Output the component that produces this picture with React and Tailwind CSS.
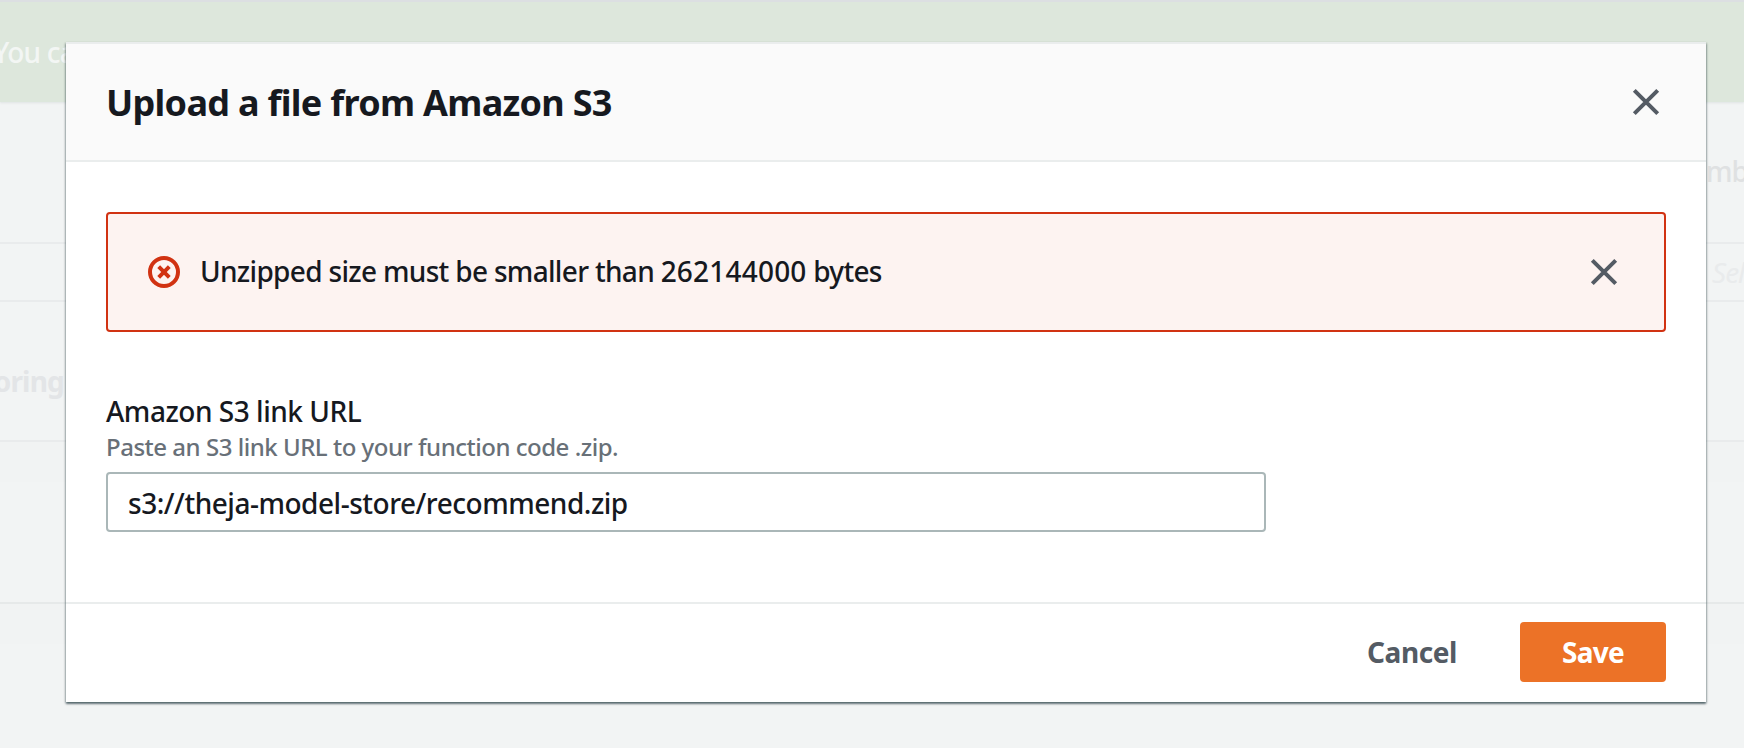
import React from "react";

function CloseIcon({ className }) {
  return (
    <svg viewBox="0 0 32 32" className={className} fill="none" stroke="#545b64" strokeWidth="4">
      <path d="M4.3 4.3 27.7 27.7M27.7 4.3 4.3 27.7" />
    </svg>
  );
}

function ErrorIcon() {
  return (
    <svg viewBox="0 0 32 32" className="h-8 w-8 shrink-0" fill="none" stroke="#d13212" strokeWidth="4">
      <circle cx="16" cy="16" r="14" />
      <path d="M10.7 10.7 21.3 21.3M21.3 10.7 10.7 21.3" />
    </svg>
  );
}

function PageBehind() {
  return (
    <div aria-hidden="true" className="flex h-[748px] flex-col overflow-hidden bg-[#f2f4f4]">
      <div className="h-0.5 shrink-0 bg-[#dcdfe2]" />
      <div className="flex h-[100px] shrink-0 items-center bg-[#dde7dc] text-[28px] font-medium tracking-[-0.8px] text-[#f3f6f4] shadow-[0_1px_2px_#dfe3e3]">
        <span className="-ml-[7px] whitespace-nowrap">You ca</span>
      </div>
      <div className="flex h-[142px] shrink-0 items-start justify-end border-b-2 border-[#e9ebec] pt-[49px]">
        <div className="w-[38px] whitespace-nowrap text-[28px] font-medium leading-10 tracking-[-1px] text-[#dfe1e2]">mb</div>
      </div>
      <div className="flex h-[58px] shrink-0 items-center justify-end border-b-2 border-[#e9ebec]">
        <div className="w-8 whitespace-nowrap text-[28px] italic leading-10 tracking-[-1px] text-[#e9ebec]">Sel</div>
      </div>
      <div className="flex h-[140px] shrink-0 items-start border-b-2 border-[#e9ebec] pt-[59px]">
        <div className="flex w-16 justify-end whitespace-nowrap text-[28px] font-bold leading-10 tracking-[-0.8px] text-[#e3e5e7]">oring</div>
      </div>
      <div className="h-10 shrink-0 bg-[#f1f3f3]" />
      <div className="h-[122px] shrink-0 border-b-2 border-[#e6e9e9]" />
      <div className="h-10 shrink-0 bg-[#f1f3f3]" />
    </div>
  );
}

export default function App() {
  return (
    <div className="relative h-[748px] w-[1744px] overflow-hidden font-['Noto_Sans',sans-serif] text-[#16191f]">
      <PageBehind />
      <div className="absolute inset-0 flex items-start pl-[66px] pt-[42px]">
        <div role="dialog" className="flex h-[660px] w-[1640px] flex-col bg-white shadow-[0_2px_2px_0_rgba(0,28,36,0.5),1px_1px_2px_0_rgba(0,28,36,0.2),-1px_1px_2px_0_rgba(0,28,36,0.2)]">
          <header className="flex h-[120px] shrink-0 items-center justify-between border-y-2 border-[#eaeded] bg-[#fafafa] pl-10 pr-11">
            <h2 className="pt-0.5 text-[36px] font-bold leading-[44px] tracking-[-0.7px]">Upload a file from Amazon S3</h2>
            <button type="button" aria-label="Close">
              <CloseIcon className="h-8 w-8" />
            </button>
          </header>

          <div className="flex grow flex-col px-10 pt-[50px]">
            <div className="flex h-[120px] items-center rounded-[4px] border-2 border-[#d13212] bg-[#fdf3f1] pl-10 pr-11">
              <ErrorIcon />
              <p className="ml-5 grow pb-0.5 text-[28px] font-medium leading-10 tracking-[-0.68px]">
                Unzipped size must be smaller than <span className="tracking-[0.2px]">262144000</span> bytes
              </p>
              <button type="button" aria-label="Dismiss">
                <CloseIcon className="h-8 w-8" />
              </button>
            </div>

            <label className="mt-[59px] text-[28px] font-medium leading-10 tracking-[-0.48px]">Amazon S3 link URL</label>
            <p className="text-[24px] font-medium leading-8 tracking-[-0.48px] text-[#687078]">
              Paste an S3 link URL to your function code .zip.
            </p>
            <input
              type="text"
              defaultValue="s3://theja-model-store/recommend.zip"
              className="mt-[9px] h-[60px] w-[1160px] rounded-[4px] border-2 border-[#aab7b8] bg-white px-5 pt-0.5 text-[28px] font-medium tracking-[-0.48px] outline-none"
            />
          </div>

          <footer className="flex h-[100px] shrink-0 items-center justify-end border-t-2 border-[#eaeded] pr-10 pb-0.5 text-[28px] font-bold leading-10">
            <button type="button" className="pr-[63px] tracking-[-0.4px] text-[#545b64]">Cancel</button>
            <button type="button" className="flex h-[60px] w-[146px] items-center justify-center rounded-[4px] bg-[#ec7227] tracking-[-0.7px] text-white">
              Save
            </button>
          </footer>
        </div>
      </div>
    </div>
  );
}
